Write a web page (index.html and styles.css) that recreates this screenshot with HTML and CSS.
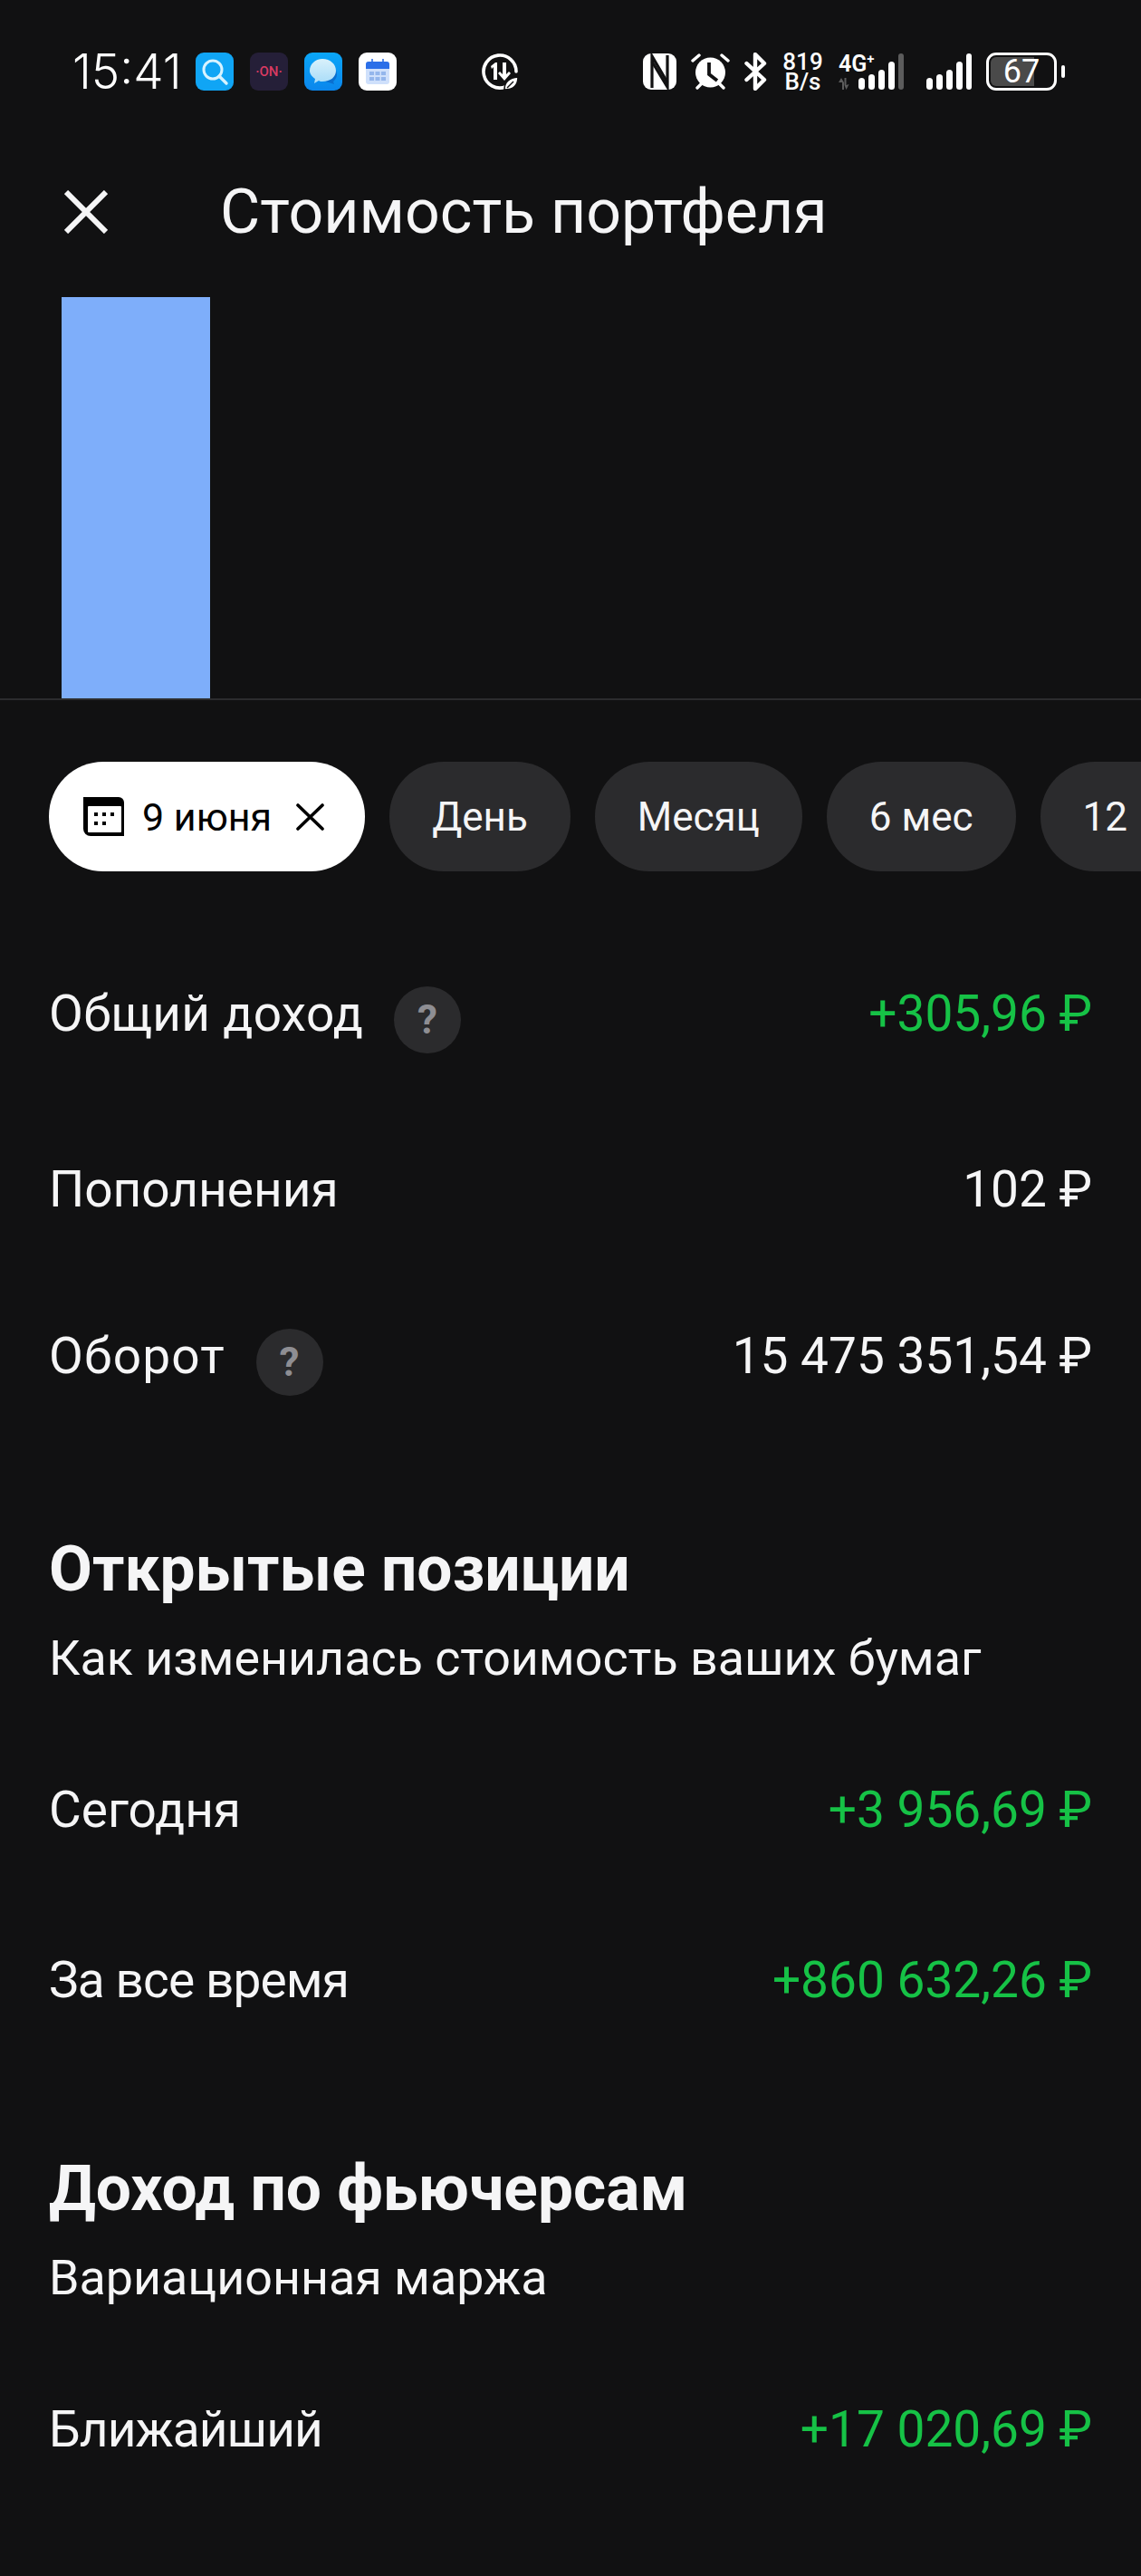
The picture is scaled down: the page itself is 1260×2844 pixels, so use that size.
FILE: index.html
```html
<!DOCTYPE html>
<html lang="ru">
  <head>
    <meta charset="UTF-8" />
    <meta name="viewport" content="width=device-width, initial-scale=1.0" />
    <title>Стоимость портфеля</title>
    <link rel="stylesheet" href="styles.css">
  </head>
  <body>
    <div class="status-bar">
      <span class="clock">15:41</span>
      <svg class="app-icon" viewBox="0 0 42 42">
        <rect width="42" height="42" rx="9" fill="#10a5f5"/>
        <circle cx="19" cy="19" r="10" fill="none" stroke="#d8f3ff" stroke-width="3"/>
        <path d="M26 26l8 8" stroke="#d8f3ff" stroke-width="3.4" stroke-linecap="round"/>
      </svg>
      <span class="app-icon on-icon">·ON·</span>
      <svg class="app-icon" viewBox="0 0 42 42">
        <defs>
          <linearGradient id="msgBg" x1="0" y1="0" x2="0" y2="1">
            <stop offset="0" stop-color="#0aa6f8"/>
            <stop offset="1" stop-color="#0b86ec"/>
          </linearGradient>
          <linearGradient id="msgBubble" x1="0" y1="0" x2="0" y2="1">
            <stop offset="0" stop-color="#d9f1fb"/>
            <stop offset="1" stop-color="#a8dcf8"/>
          </linearGradient>
        </defs>
        <rect width="42" height="42" rx="9" fill="url(#msgBg)"/>
        <path d="M24 14c8 0 12 5 12 10 0 4-2 6-4 8l1 3-6-2-8-2z" fill="#0a6fd0"/>
        <path d="M20 7c9 0 15 6 15 13s-6 12-15 12c-1 0-3 0-4-1l-5 3 1-5c-3-2-6-5-6-9C6 13 12 7 20 7z" fill="url(#msgBubble)"/>
      </svg>
      <svg class="app-icon" viewBox="0 0 42 42">
        <rect width="42" height="42" rx="9" fill="#fff"/>
        <rect x="8" y="10" width="26" height="25" rx="3" fill="#cfe0fb"/>
        <path d="M8 13a3 3 0 0 1 3-3h20a3 3 0 0 1 3 3v5H8z" fill="#2b6fe8"/>
        <path d="M15 7v5M27 7v5" stroke="#2b6fe8" stroke-width="1.6"/>
        <path d="M12 21h5v4h-5zM18.500 21h5v4h-5zM25 21h5v4h-5zM12 27h5v4h-5zM18.500 27h5v4h-5zM25 27h5v4h-5z" fill="#94b6ec"/>
      </svg>
      <svg class="saver-icon" viewBox="0 0 42 42">
        <path d="M27 38A18 18 0 1 1 39 21" fill="none" stroke="#fff" stroke-width="3.6" stroke-linecap="round"/>
        <path d="M11 15l5-4h2v19h-4V16l-2 2z" fill="#fff"/>
        <path d="M23 11h4v13l3-3 2 2-7 8-7-8 2-2 3 3z" fill="#fff" transform="translate(1 0)"/>
        <path d="M26 41c0-8 5-13 15-14 0 9-5 14-15 14z" fill="#fff" stroke="#111112" stroke-width="1.500"/>
        <path d="M29 39l7-7" stroke="#111112" stroke-width="1.500"/>
      </svg>
      <div class="status-right">
        <svg class="nfc-icon" viewBox="0 0 37 40">
          <rect width="37" height="40" rx="9" fill="#fff"/>
          <path d="M10 38V3l17 29" fill="none" stroke="#111112" stroke-width="3.2"/>
          <path d="M27 2v35L10 9" fill="none" stroke="#111112" stroke-width="3.2"/>
        </svg>
        <svg class="alarm-icon" viewBox="0 0 43 42">
          <circle cx="21.500" cy="22" r="16.500" fill="#fff"/>
          <path d="M2 9l7-6M41 9l-7-6M7 39l4-4M36 39l-4-4" stroke="#fff" stroke-width="3.4" stroke-linecap="round"/>
          <path d="M20 11v13l9 7" fill="none" stroke="#111112" stroke-width="3.8"/>
        </svg>
        <svg class="bt-icon" viewBox="0 0 25 42">
          <path d="M2.500 12L22 30l-10 10V2l10 10L2.500 30" fill="none" stroke="#fff" stroke-width="4.400" stroke-linejoin="round" stroke-linecap="round"/>
        </svg>
        <div class="net-speed">819 B/s</div>
        <div class="sim-one">
          <div class="sim-text">
            <span class="sim-label">4G<sup>+</sup></span>
            <svg class="sim-arrows" viewBox="0 0 12 13">
              <path d="M0 5l3-5 3 5v8H4V5zM6.500 0h2v8l3-1-3 6-2-5z" fill="#5c5c5c"/>
            </svg>
          </div>
          <svg class="signal-bars" viewBox="0 0 50 40">
            <rect x="0" y="27" width="7" height="13" rx="3.500" fill="#fff"/>
            <rect x="11" y="23" width="7" height="17" rx="3.500" fill="#fff"/>
            <rect x="22" y="18" width="7" height="22" rx="3.500" fill="#fff"/>
            <rect x="33" y="9" width="7" height="31" rx="3.500" fill="#fff"/>
            <rect x="44" y="0" width="6" height="40" rx="3" fill="#5c5c5c"/>
          </svg>
        </div>
        <svg class="signal-bars signal-two" viewBox="0 0 50 40">
          <rect x="0" y="27" width="7" height="13" rx="3.500" fill="#fff"/>
          <rect x="11" y="23" width="7" height="17" rx="3.500" fill="#fff"/>
          <rect x="22" y="18" width="7" height="22" rx="3.500" fill="#fff"/>
          <rect x="33" y="9" width="7" height="31" rx="3.500" fill="#fff"/>
          <rect x="44" y="0" width="6" height="40" rx="3" fill="#fff"/>
        </svg>
        <div class="battery"><span class="battery-fill"></span><span class="battery-num">67</span></div>
        <span class="battery-nub"></span>
      </div>
    </div>

    <div class="top-bar">
      <svg class="close-icon" viewBox="0 0 48 48">
        <path d="M2 2l44 44M46 2L2 46" stroke="#f5f5f6" stroke-width="6"/>
      </svg>
      <h1 class="page-title">Стоимость портфеля</h1>
    </div>

    <div class="chart">
      <div class="chart-bar"></div>
    </div>

    <div class="chips">
      <div class="chip chip-active">
        <svg class="chip-cal" viewBox="0 0 45 43">
          <path d="M0 0h39a6 6 0 0 1 6 6v37H8a8 8 0 0 1-8-8z" fill="#000"/>
          <rect x="5" y="10" width="37" height="29" rx="1" fill="#fff"/>
          <path d="M12 17h4v4h-4zM21 17h4v4h-4zM30 17h4v4h-4zM12 27h4v4h-4zM21 27h4v4h-4z" fill="#000"/>
        </svg>
        <span>9 июня</span>
        <svg class="chip-close" viewBox="0 0 31 30">
          <path d="M2 2l27 26M29 2L2 28" stroke="#000" stroke-width="3.6" stroke-linecap="round"/>
        </svg>
      </div>
      <div class="chip">День</div>
      <div class="chip">Месяц</div>
      <div class="chip">6 мес</div>
      <div class="chip chip-cut">12 мес</div>
    </div>

    <div class="rows">
      <div class="row">
        <span class="row-label spaced-sm">Общий доход <span class="help">?</span></span>
        <span class="row-value green">+305,96 ₽</span>
      </div>
      <div class="row row-wide">
        <span class="row-label">Пополнения</span>
        <span class="row-value">102 ₽</span>
      </div>
      <div class="row row-tight">
        <span class="row-label spaced">Оборот <span class="help">?</span></span>
        <span class="row-value">15 475 351,54 ₽</span>
      </div>
    </div>

    <section class="block">
      <h2 class="block-title">Открытые позиции</h2>
      <p class="block-sub">Как изменилась стоимость ваших бумаг</p>
      <div class="row">
        <span class="row-label">Сегодня</span>
        <span class="row-value green">+3 956,69 ₽</span>
      </div>
      <div class="row">
        <span class="row-label narrow">За все время</span>
        <span class="row-value green">+860 632,26 ₽</span>
      </div>
    </section>

    <section class="block">
      <h2 class="block-title">Доход по фьючерсам</h2>
      <p class="block-sub">Вариационная маржа</p>
      <div class="row">
        <span class="row-label narrow">Ближайший</span>
        <span class="row-value green">+17 020,69 ₽</span>
      </div>
    </section>
  </body>
</html>
```

FILE: styles.css
```css
html, body {
  margin: 0;
  padding: 0;
}
body {
  width: 1260px;
  height: 2844px;
  overflow: hidden;
  background-color: #111112;
  color: #f5f5f6;
  font-family: Roboto, "Noto Sans", sans-serif;
}

/* status bar */
.status-bar {
  display: flex;
  align-items: center;
  height: 42px;
  padding: 58px 0 0 80px;
}
.clock {
  width: 136px;
  font-family: Inter, Roboto, sans-serif;
  font-size: 53px;
  font-weight: 300;
  line-height: 42px;
  color: #fff;
}
.app-icon {
  display: block;
  width: 42px;
  height: 42px;
  margin-right: 18px;
}
.on-icon {
  display: flex;
  align-items: center;
  justify-content: center;
  border-radius: 9px;
  background-color: #251f38;
  color: #d93a62;
  font-size: 15px;
  font-weight: 500;
}
.saver-icon {
  width: 42px;
  height: 42px;
  margin-left: 75px;
}
.status-right {
  display: flex;
  align-items: center;
  margin-left: 137px;
}
.nfc-icon {
  width: 37px;
  height: 40px;
}
.alarm-icon {
  width: 43px;
  height: 42px;
  margin-left: 16px;
}
.bt-icon {
  width: 25px;
  height: 42px;
  margin-left: 16px;
}
.net-speed {
  width: 45px;
  margin-left: 17px;
  font-size: 26px;
  font-weight: 500;
  line-height: 22px;
  text-align: center;
  color: #fff;
}
.sim-one {
  display: flex;
  margin-left: 17px;
}
.sim-text {
  display: flex;
  flex-direction: column;
  width: 22px;
}
.sim-label {
  font-size: 25px;
  font-weight: 600;
  line-height: 24px;
  white-space: nowrap;
  color: #fff;
}
.sim-label sup {
  font-size: 15px;
  line-height: 0;
}
.sim-arrows {
  width: 12px;
  height: 13px;
  margin-top: 3px;
}
.signal-bars {
  width: 50px;
  height: 40px;
}
.signal-two {
  margin-left: 25px;
}
.battery {
  position: relative;
  display: flex;
  align-items: center;
  justify-content: center;
  box-sizing: border-box;
  width: 78px;
  height: 42px;
  margin-left: 16px;
  border: 3px solid #fff;
  border-radius: 11px;
  overflow: hidden;
}
.battery-fill {
  position: absolute;
  left: 2px;
  top: 2px;
  bottom: 2px;
  width: 48px;
  background-color: #4a4a4a;
  border-radius: 6px 0 0 6px;
}
.battery-num {
  position: relative;
  font-size: 36px;
  color: #fff;
}
.battery-nub {
  width: 4px;
  height: 14px;
  margin-left: 5px;
  border-radius: 2px;
  background-color: #fff;
}

/* header */
.top-bar {
  display: flex;
  align-items: center;
  height: 68px;
  margin-top: 100px;
  padding-left: 71px;
}
.close-icon {
  width: 48px;
  height: 48px;
}
.page-title {
  margin: 0 0 0 124px;
  font-size: 68px;
  font-weight: 400;
  line-height: 68px;
}

/* chart */
.chart {
  height: 443px;
  margin-top: 60px;
  padding-left: 68px;
  border-bottom: 2px solid #2c2c2e;
}
.chart-bar {
  width: 164px;
  height: 100%;
  background-color: #7eaefa;
}

/* period chips */
.chips {
  display: flex;
  gap: 27px;
  margin-top: 68px;
  padding-left: 54px;
  overflow: hidden;
}
.chip {
  display: flex;
  flex: none;
  align-items: center;
  height: 121px;
  padding: 0 47px;
  border-radius: 60px;
  background-color: #2b2b2d;
  font-size: 44px;
}
.chip-active {
  padding: 0 45px 0 38px;
  background-color: #fff;
  color: #000;
  font-size: 43px;
}
.chip-cut {
  word-spacing: 12px;
}
.chip-cal {
  width: 45px;
  height: 43px;
  margin-right: 20px;
}
.chip-close {
  width: 31px;
  height: 30px;
  margin-left: 27px;
}

/* rows */
.rows {
  margin-top: 112px;
}
.row {
  display: flex;
  align-items: center;
  justify-content: space-between;
  height: 90px;
  padding: 0 54px;
  font-size: 55px;
}
.row-wide {
  margin-top: 104px;
}
.row-tight {
  margin-top: 94px;
}
.row-label {
  display: flex;
  align-items: center;
}
.spaced-sm {
  letter-spacing: 0.3px;
}
.spaced {
  letter-spacing: 1.2px;
}
.narrow {
  letter-spacing: -0.9px;
}
.row-value {
  white-space: pre;
}
.green {
  color: #16c246;
}
.help {
  display: flex;
  align-items: center;
  justify-content: center;
  width: 74px;
  height: 74px;
  margin: 14px 0 0 34px;
  border-radius: 50%;
  background-color: #2b2b2d;
  color: #8e8e93;
  font-size: 44px;
  font-weight: 700;
}
.block {
  padding-top: 151px;
}
.block + .block {
  padding-top: 146px;
}
.block-title {
  margin: 0;
  padding: 0 54px;
  font-size: 69.5px;
  font-weight: 700;
  line-height: 80px;
}
.block-sub {
  margin: 18px 0 82px;
  padding: 0 54px;
  font-size: 53.8px;
  line-height: 80px;
}
.block .row + .row {
  margin-top: 98px;
}
```
